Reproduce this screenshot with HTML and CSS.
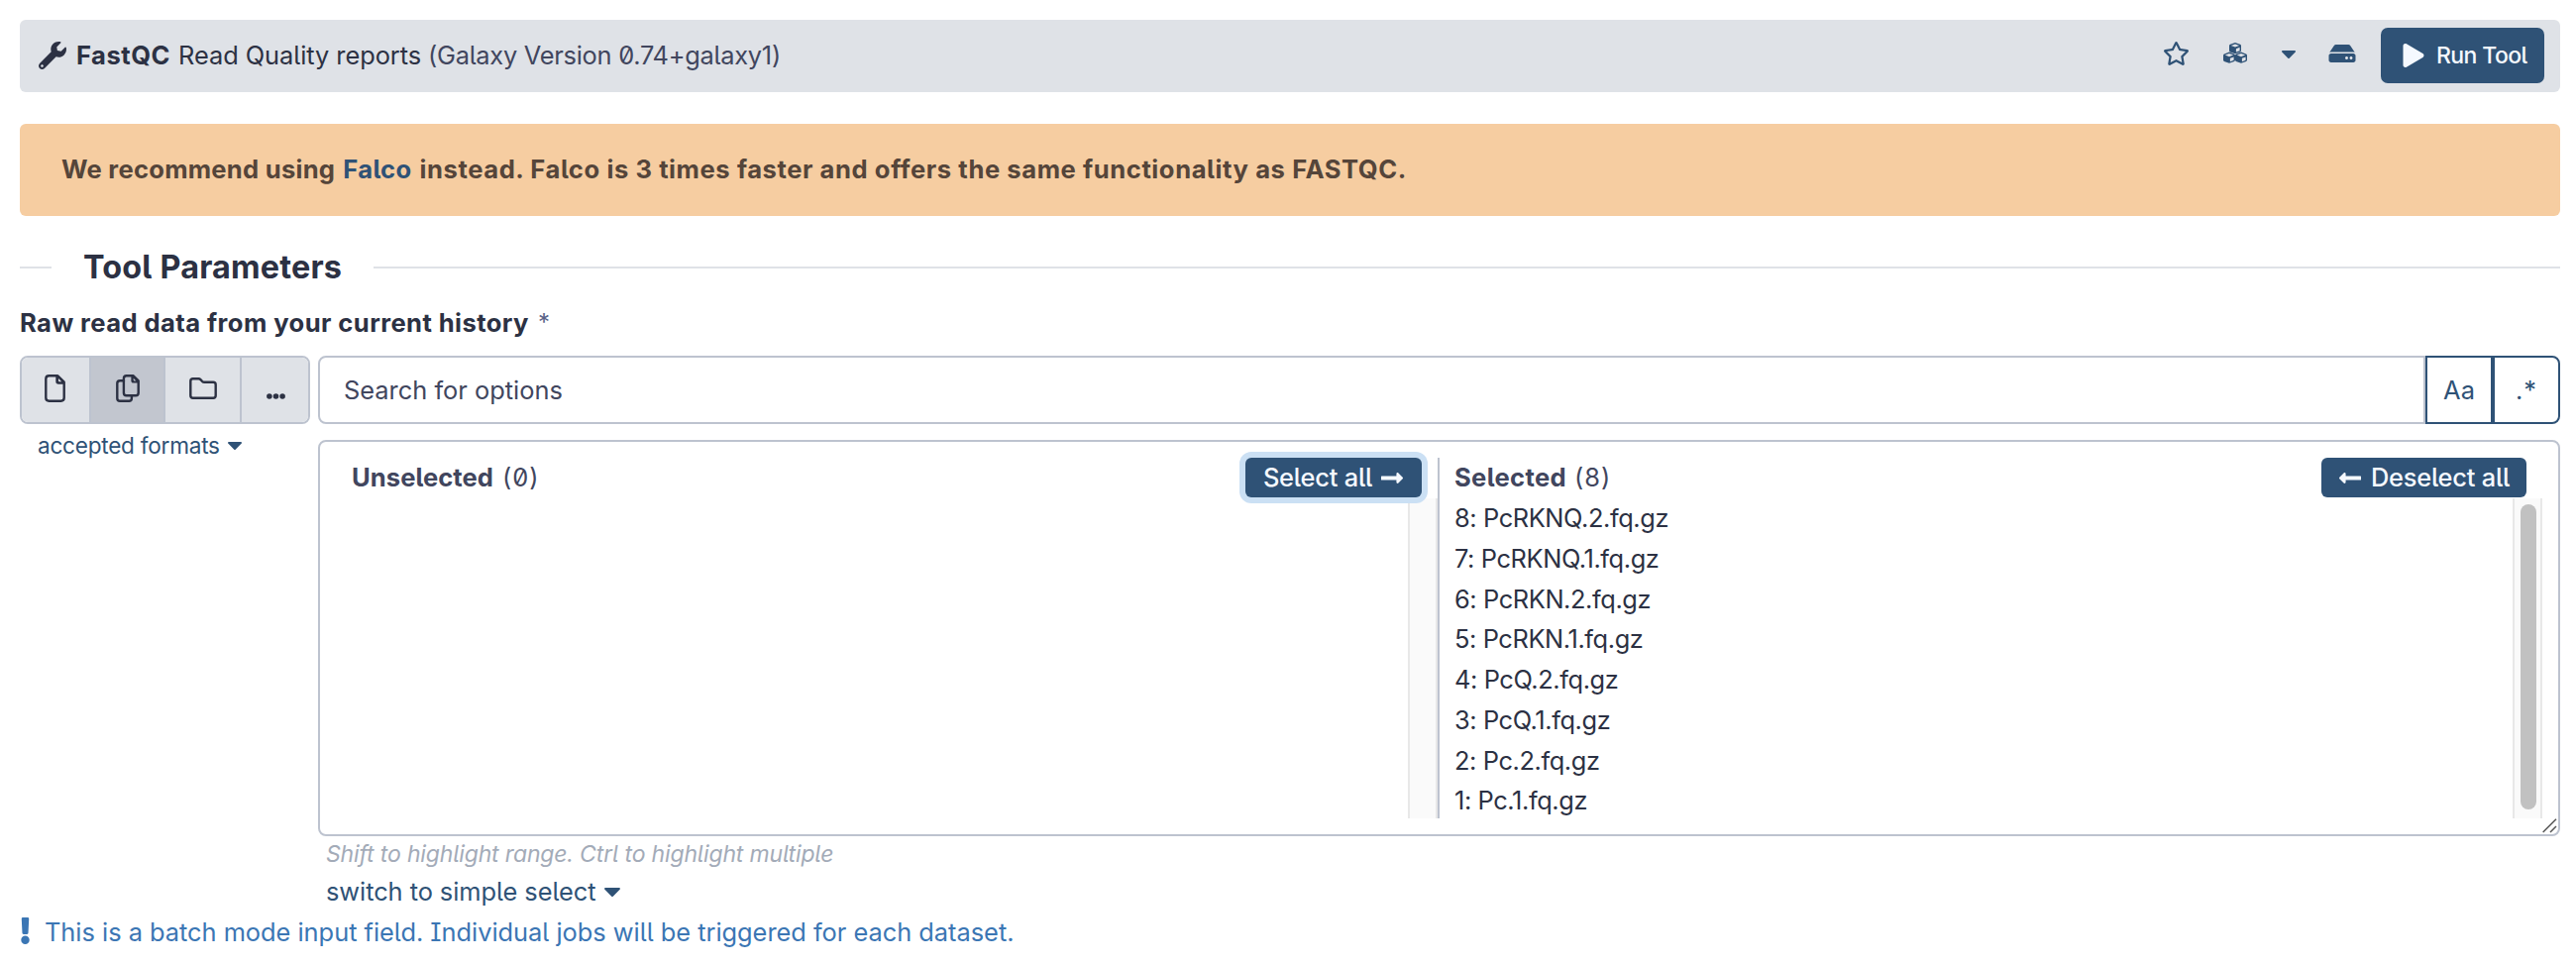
FILE: index.html
```html
<!DOCTYPE html>
<html lang="en">
<head>
<meta charset="utf-8">
<title>FastQC</title>
<link rel="stylesheet" href="styles.css">
</head>
<body>
<header class="tool-header">
  <svg class="icon-wrench" viewBox="0 0 512 512"><path d="M507.73 109.1c-2.24-9.03-13.54-12.09-20.12-5.51l-74.36 74.36-67.88-11.31-11.31-67.88 74.36-74.36c6.62-6.62 3.43-17.9-5.66-20.16-47.38-11.74-99.55.91-136.58 37.93-39.64 39.64-50.55 97.1-34.05 147.2L18.74 402.76c-24.99 24.99-24.99 65.51 0 90.5 24.99 24.99 65.51 24.99 90.5 0l213.21-213.21c50.12 16.71 107.47 5.68 147.37-34.22 37.07-37.07 49.7-89.32 37.91-136.73zM64 472c-13.25 0-24-10.75-24-24 0-13.26 10.75-24 24-24s24 10.75 24 24c0 13.25-10.75 24-24 24z"/></svg>
  <h1 class="tool-title"><b class="tool-name">FastQC</b><span class="tool-desc">Read Quality reports</span><span class="tool-version">(Galaxy Version 0.74+galaxy1)</span></h1>
  <div class="tool-actions">
    <svg class="icon-star" viewBox="20 0 536 512"><path d="M528.1 171.5L382 150.2 316.7 17.8c-11.7-23.6-45.6-23.9-57.4 0L194 150.2 47.9 171.5c-26.2 3.8-36.7 36.1-17.7 54.6l105.7 103-25 145.5c-4.5 26.3 23.2 46 46.4 33.7L288 439.6l130.7 68.7c23.2 12.2 50.9-7.4 46.4-33.7l-25-145.5 105.7-103c19-18.5 8.5-50.8-17.7-54.6zM388.6 312.3l23.7 138.4L288 385.4l-124.3 65.3 23.7-138.4-100.6-98 139-20.2 62.2-126 62.2 126 139 20.2-100.6 98z"/></svg>
    <svg class="icon-cubes" viewBox="0 0 24 21">
      <defs><g id="cube"><path d="M6 0 L11 1.8 Q12 2.2 12 3.2 V8 Q12 9 11.1 9.4 L6.7 11 Q6 11.2 5.3 11 L.9 9.4 Q0 9 0 8 V3.2 Q0 2.2 1 1.8Z"/><path class="cube-face" d="M6 1.5 L10.2 3 L6 4.6 L1.8 3Z M6.9 6.2 L10.6 4.8 V8.2 L6.9 9.6Z"/></g></defs>
      <use href="#cube" x="6" y="0"/><use href="#cube" x="0" y="9.6"/><use href="#cube" x="12" y="9.6"/>
    </svg>
    <svg class="icon-caret caret-header" viewBox="12 192 296 169"><path d="M31.3 192h257.3c17.8 0 26.7 21.5 14.1 34.1L174.1 354.8c-7.8 7.8-20.5 7.8-28.3 0L17.2 226.1C4.6 213.5 13.5 192 31.3 192z"/></svg>
    <svg class="icon-hdd" viewBox="0 64 576 384"><path d="M576 304v96c0 26.51-21.49 48-48 48H48c-26.51 0-48-21.49-48-48v-96c0-26.51 21.49-48 48-48h480c26.51 0 48 21.49 48 48zm-48-80a79.557 79.557 0 0 1 30.777 6.165L462.25 85.374A48.003 48.003 0 0 0 422.311 64H153.689a48 48 0 0 0-39.938 21.374L17.223 230.165A79.557 79.557 0 0 1 48 224h480zm-48 96c-17.673 0-32 14.327-32 32s14.327 32 32 32 32-14.327 32-32-14.327-32-32-32zm-96 0c-17.673 0-32 14.327-32 32s14.327 32 32 32 32-14.327 32-32-14.327-32-32-32z"/></svg>
    <button class="run-button"><svg class="icon-play" viewBox="0 0 448 512"><path d="M424.4 214.7L72.4 6.6C43.8-10.3 0 6.1 0 47.9V464c0 37.5 40.7 60.1 72.4 41.3l352-208c31.4-18.5 31.5-64.1 0-82.6z"/></svg><span>Run Tool</span></button>
  </div>
</header>

<div class="alert"><span class="alert-lead">We recommend using</span> <a class="alert-link">Falco</a> <span class="alert-rest">instead. Falco is 3 times faster and offers the same functionality as FASTQC.</span></div>

<h2 class="section-heading"><span>Tool Parameters</span></h2>

<div class="field-label"><span>Raw read data from your current history</span><i class="required">*</i></div>

<main class="field">
  <div class="source">
    <div class="source-buttons">
      <button class="source-button file"><svg width="22" height="28" viewBox="0 0 22 28"><path class="line" d="M5 1.3H13.3L19.7 7.7V23.5Q19.7 26.7 16.5 26.7H4.5Q1.3 26.7 1.3 23.5V4.5Q1.3 1.3 4.5 1.3Z"/><path class="fill" d="M11.3 1.3H14L20 7.5V9.8H14Q11.3 9.8 11.3 7.1Z"/><path class="fold" d="M14 4V6.2Q14 7.2 15 7.2H17.2Z"/></svg></button>
      <button class="source-button files active"><svg width="24" height="28" viewBox="0 0 24 28"><path class="line" d="M8 6.3H4Q1.3 6.3 1.3 9V24Q1.3 26.7 4 26.7H13.2Q15.9 26.7 15.9 24V22"/><path class="line" d="M10.6 1.3H17.6L22.7 6.4V18.6Q22.7 21.3 20 21.3H10.6Q7.9 21.3 7.9 18.6V4Q7.9 1.3 10.6 1.3Z"/><path class="fill" d="M15.4 1.3H18L23 6.4V8.6H17.6Q15.4 8.6 15.4 6.4Z"/><path class="fold" d="M17.7 3.8V5.5Q17.7 6.4 18.6 6.4H20.3Z"/></svg></button>
      <button class="source-button folder"><svg width="28" height="22" viewBox="0 0 28 22"><path class="line" d="M3.8 1.3H9.5Q10.6 1.3 11.4 2.1L13 3.8Q14 4.8 15.3 4.8H24.2Q26.7 4.8 26.7 7.3V18.2Q26.7 20.7 24.2 20.7H3.8Q1.3 20.7 1.3 18.2V3.8Q1.3 1.3 3.8 1.3Z"/></svg></button>
      <button class="source-button more"><svg width="19" height="6" viewBox="0 0 19 6"><circle class="fill" cx="2.9" cy="3" r="2.8"/><circle class="fill" cx="9.5" cy="3" r="2.8"/><circle class="fill" cx="16.1" cy="3" r="2.8"/></svg></button>
    </div>
    <a class="formats"><span>accepted formats</span><svg class="icon-caret" viewBox="12 192 296 169"><path d="M31.3 192h257.3c17.8 0 26.7 21.5 14.1 34.1L174.1 354.8c-7.8 7.8-20.5 7.8-28.3 0L17.2 226.1C4.6 213.5 13.5 192 31.3 192z"/></svg></a>
  </div>

  <div class="selector">
    <div class="search">
      <div class="search-input">Search for options</div>
      <button class="search-toggle case">Aa</button>
      <button class="search-toggle regex">.*</button>
    </div>

    <div class="panel">
      <section class="column unselected">
        <div class="column-head">
          <b class="head-unselected">Unselected</b><span class="count">(0)</span>
          <button class="move-button focused"><span>Select all</span><svg class="icon-arrow" viewBox="0 124 448 264"><path d="M313.941 216H12c-6.627 0-12 5.373-12 12v56c0 6.627 5.373 12 12 12h301.941v46.059c0 21.382 25.851 32.09 40.971 16.971l86.059-86.059c9.373-9.373 9.373-24.569 0-33.941l-86.059-86.059c-15.119-15.119-40.971-4.411-40.971 16.971V216z"/></svg></button>
        </div>
        <div class="column-body"><div class="track"></div></div>
      </section>
      <section class="column selected">
        <div class="column-head">
          <b class="head-selected">Selected</b><span class="count">(8)</span>
          <button class="move-button deselect"><svg class="icon-arrow" viewBox="0 124 448 264"><path d="M134.059 296H436c6.627 0 12-5.373 12-12v-56c0-6.627-5.373-12-12-12H134.059v-46.059c0-21.382-25.851-32.09-40.971-16.971L7.029 239.029c-9.373 9.373-9.373 24.569 0 33.941l86.059 86.059c15.119 15.119 40.971 4.411 40.971-16.971V296z"/></svg><span>Deselect all</span></button>
        </div>
        <div class="column-body">
          <ul class="options">
            <li>8: PcRKNQ.2.fq.gz</li>
            <li>7: PcRKNQ.1.fq.gz</li>
            <li>6: PcRKN.2.fq.gz</li>
            <li>5: PcRKN.1.fq.gz</li>
            <li>4: PcQ.2.fq.gz</li>
            <li>3: PcQ.1.fq.gz</li>
            <li>2: Pc.2.fq.gz</li>
            <li>1: Pc.1.fq.gz</li>
          </ul>
          <div class="track"><div class="thumb"></div></div>
        </div>
      </section>
      <svg class="grip" viewBox="0 0 15 15"><path d="M.7 14L14 .7M8 14L14 8"/></svg>
    </div>

    <div class="hint">Shift to highlight range. Ctrl to highlight multiple</div>
    <a class="switch"><span>switch to simple select</span><svg class="icon-caret caret-switch" viewBox="12 192 296 169"><path d="M31.3 192h257.3c17.8 0 26.7 21.5 14.1 34.1L174.1 354.8c-7.8 7.8-20.5 7.8-28.3 0L17.2 226.1C4.6 213.5 13.5 192 31.3 192z"/></svg></a>
  </div>
</main>

<footer class="batch-note"><svg class="icon-bang" viewBox="16 0 160 512"><path d="M176 432c0 44.112-35.888 80-80 80s-80-35.888-80-80 35.888-80 80-80 80 35.888 80 80zM25.26 25.199l13.6 272C39.499 309.972 50.041 320 62.83 320h66.34c12.789 0 23.331-10.028 23.97-22.801l13.6-272C167.425 11.49 156.496 0 142.77 0H49.23C35.504 0 24.575 11.49 25.26 25.199z"/></svg><span>This is a batch mode input field. Individual jobs will be triggered for each dataset.</span></footer>
</body>
</html>
```
FILE: styles.css
```css
:root {
  --text: #2c3143;
  --muted: #41465e;
  --blue: #2f5276;
  --border: #bdc3cf;
  --grey: #dfe2e7;
}
* { box-sizing: border-box; }
body {
  margin: 0;
  padding: 20px 16px 0 20px;
  background: #fff;
  color: var(--text);
  font-family: Inter, "Noto Sans", sans-serif;
  font-size: 25.4px;
  line-height: 40px;
  font-feature-settings: "zero" 1, "cv05" 1, "cv08" 1;
  white-space: nowrap;
}
button { font: inherit; font-feature-settings: inherit; color: inherit; padding: 0; border: 0; cursor: pointer; }
svg { display: block; flex: none; fill: currentColor; }
h1, h2, ul { margin: 0; padding: 0; font-size: inherit; font-weight: 400; }

.tool-header {
  display: flex;
  align-items: flex-start;
  height: 73px;
  padding: 8px 16px 0 19px;
  border-radius: 6px;
  background: var(--grey);
}
.icon-wrench { width: 28px; height: 28px; margin-top: 14px; }
.tool-title { display: flex; margin: 8px 0 0 10px; }
.tool-name { width: 103px; font-size: 25.6px; font-weight: 700; letter-spacing: .5px; }
.tool-desc { width: 252px; letter-spacing: -.05px; }
.tool-version { color: var(--muted); letter-spacing: -.27px; }
.tool-actions { display: flex; margin-left: auto; color: var(--blue); }
.icon-star { width: 25px; height: 24px; margin: 14px 35px 0 0; }
.icon-cubes { width: 24px; height: 21px; margin: 15px 35px 0 0; }
.cube-face { fill: var(--grey); }
.icon-caret { width: 14px; height: 8px; }
.caret-header { margin: 23px 33px 0 0; }
.icon-hdd { width: 28px; height: 18px; margin: 17px 25px 0 0; }
.run-button {
  display: flex;
  align-items: center;
  width: 165px;
  height: 56px;
  padding-left: 22px;
  border-radius: 7px;
  background: var(--blue);
  color: #f5f9ff;
  font-size: 23px;
  font-weight: 500;
  letter-spacing: -.6px;
}
.icon-play { width: 22px; height: 24px; margin-right: 12px; }

.alert {
  height: 93px;
  margin-top: 32px;
  padding: 26px 42px 0;
  border-radius: 6px;
  background: #f6cda1;
  color: #55453a;
  font-size: 25.6px;
  font-weight: 700;
}
.alert-lead { letter-spacing: .25px; }
.alert-link { color: var(--blue); letter-spacing: .3px; margin: 0 2px; }
.alert-rest { letter-spacing: .57px; }

.section-heading {
  display: flex;
  align-items: center;
  gap: 32px;
  height: 52px;
  margin-top: 26px;
  font-size: 32.4px;
  font-weight: 700;
  letter-spacing: .18px;
}
.section-heading::before, .section-heading::after { content: ""; height: 2px; background: var(--grey); }
.section-heading::before { width: 32px; }
.section-heading::after { flex: 1; }

.field-label { display: flex; margin-top: 10px; font-size: 25.6px; font-weight: 700; letter-spacing: .42px; }
.required { margin-left: 9px; color: #5a6388; font-size: 24px; font-style: normal; font-weight: 400; line-height: 39px; }

.field { display: grid; grid-template-columns: 293px 1fr; column-gap: 8px; margin-top: 13px; }
.source-buttons {
  display: grid;
  grid-template-columns: 70px 75px 77px 1fr;
  height: 69px;
  border: 2px solid var(--border);
  border-radius: 8px;
  overflow: hidden;
}
.source-button { display: flex; justify-content: center; padding-top: 17px; background: var(--grey); border-right: 2px solid var(--border); }
.source-button:last-child { border-right: 0; }
.source-button.active { background: #c2c6cf; }
.source-button.folder { padding-top: 20px; }
.source-button.more { padding: 36px 0 0 1px; }
.line { fill: none; stroke: var(--text); stroke-width: 2.4; stroke-linejoin: round; stroke-linecap: round; }
.fill { fill: var(--text); }
.fold { fill: var(--grey); }
.active .fold { fill: #c2c6cf; }
.formats {
  display: flex;
  align-items: center;
  gap: 8px;
  height: 36px;
  margin-top: 4px;
  padding-left: 18px;
  color: var(--blue);
  font-size: 22.6px;
  letter-spacing: -.25px;
}

.search { display: flex; height: 69px; }
.search-input {
  flex: 1;
  padding-left: 24px;
  border: 2px solid var(--border);
  border-radius: 8px 0 0 8px;
  color: var(--muted);
  line-height: 65px;
}
.search-toggle { height: 69px; border: 2px solid var(--blue); background: #fff; color: var(--blue); line-height: 65px; }
.search-toggle.case { width: 68px; }
.search-toggle.regex { width: 68px; border-radius: 0 8px 8px 0; letter-spacing: 1px; }

.panel {
  position: relative;
  display: grid;
  grid-template-columns: 1130px 1fr;
  grid-template-rows: 364px;
  height: 400px;
  margin-top: 16px;
  padding: 16px 16px 16px 0;
  border: 2px solid var(--border);
  border-radius: 8px;
}
.column { display: flex; flex-direction: column; }
.unselected { border-right: 2px solid var(--border); }
.column-head { display: flex; height: 41px; color: var(--muted); }
.unselected .column-head { padding: 0 16px 0 32px; }
.selected .column-head { padding: 0 16px 0 15px; }
.column-head b { font-size: 25.6px; font-weight: 700; }
.head-unselected { width: 152px; letter-spacing: .05px; }
.head-selected { width: 121px; letter-spacing: .35px; }
.count { letter-spacing: 1px; }
.move-button {
  display: flex;
  align-items: center;
  justify-content: center;
  gap: 8px;
  width: 178px;
  height: 40px;
  margin-left: auto;
  border-radius: 6px;
  background: var(--blue);
  color: #f5f9ff;
  font-weight: 500;
  letter-spacing: -.2px;
}
.move-button.focused { position: relative; z-index: 1; box-shadow: 0 0 0 6px #cbe0f4; }
.move-button.deselect { width: 207px; gap: 9px; }
.icon-arrow { width: 24px; height: 13px; }
.column-body { display: flex; flex: 1; min-height: 0; }
.track { width: 30px; height: 323px; margin-left: auto; padding: 6px; border: solid #e8e8e8; border-width: 0 2px; background: #fafafa; }
.thumb { width: 16px; height: 308px; border-radius: 8px; background: #c1c1c1; }
.options { padding-left: 15px; list-style: none; line-height: 40.75px; letter-spacing: -.4px; }
.grip { position: absolute; right: 1px; bottom: 1px; width: 15px; height: 15px; fill: none; stroke: #555; stroke-width: 1.5; }

.hint { height: 36px; padding-left: 8px; color: #a3abb8; font-size: 23px; font-style: italic; line-height: 36px; letter-spacing: -.16px; }
.switch { display: flex; align-items: center; gap: 9px; height: 40px; padding-left: 8px; color: var(--blue); letter-spacing: -.06px; }
.caret-switch { width: 16px; height: 9px; }
.batch-note { display: flex; gap: 15px; margin-top: 1px; color: #3b76b4; letter-spacing: -.02px; }
.icon-bang { width: 9px; height: 27px; margin: 5px 0 0 1px; }
```
